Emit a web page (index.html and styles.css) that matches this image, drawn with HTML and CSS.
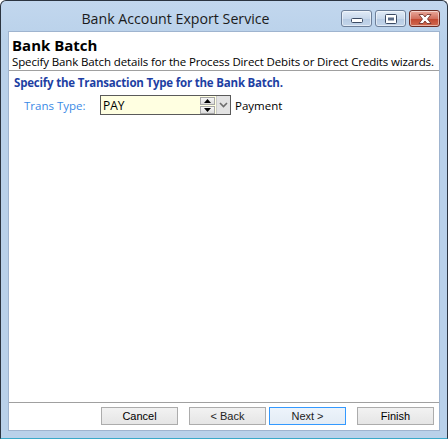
FILE: index.html
```html
<!DOCTYPE html>
<html lang="en">
  <head>
    <meta charset="UTF-8" />
    <title>Bank Account Export Service</title>
    <link rel="stylesheet" href="styles.css">
  </head>
  <body>
    <div class="window">
      <div class="titlebar">
        <div class="titlebar__text">Bank Account Export Service</div>
        <div class="caption">
          <div class="caption__btn caption__btn--min">
            <svg width="12" height="6" viewBox="0 0 12 6"><rect x="0.5" y="0.5" width="11" height="4" rx="1" fill="#fff" stroke="#3b4a63"/></svg>
          </div>
          <div class="caption__btn caption__btn--max">
            <svg width="12" height="10" viewBox="0 0 12 10"><rect x="0.5" y="0.5" width="11" height="9" rx="1" fill="#fff" stroke="#3b4a63"/><rect x="3" y="3.5" width="6" height="3" fill="#5b6c88"/></svg>
          </div>
          <div class="caption__btn caption__btn--close">
            <svg width="16" height="10" viewBox="0 0 16 10"><path d="M2 0.5 H6 L8 3 L10 0.5 H14 L10.5 5 L14 9.5 H10 L8 7 L6 9.5 H2 L5.5 5 Z" fill="#fff" stroke="#6a2a22" stroke-width="0.8" stroke-linejoin="round"/></svg>
          </div>
        </div>
      </div>
      <div class="client">
        <div class="header">
          <div class="header__title">Bank Batch</div>
          <div class="header__desc">Specify Bank Batch details for the Process Direct Debits or Direct Credits wizards.</div>
        </div>
        <div class="body">
          <div class="body__heading">Specify the Transaction Type for the Bank Batch.</div>
          <div class="field">
            <label class="field__label">Trans Type:</label>
            <div class="combo">
              <div class="combo__value">PAY</div>
              <div class="spin">
                <div class="spin__btn"><svg width="7" height="4" viewBox="0 0 7 4"><path d="M0 4 L3.5 0 L7 4 Z" fill="#000"/></svg></div>
                <div class="spin__btn"><svg width="7" height="4" viewBox="0 0 7 4"><path d="M0 0 L3.5 4 L7 0 Z" fill="#000"/></svg></div>
              </div>
              <div class="combo__drop">
                <svg width="9" height="6" viewBox="0 0 9 6"><path d="M1 1 L4.5 4.5 L8 1" fill="none" stroke="#6d6d6d" stroke-width="1.6"/></svg>
              </div>
            </div>
            <div class="field__desc">Payment</div>
          </div>
        </div>
        <div class="footer">
          <button class="btn btn--dark">Cancel</button>
          <div class="footer__pair">
            <button class="btn">&lt; Back</button>
            <button class="btn btn--default">Next &gt;</button>
          </div>
          <button class="btn btn--dark">Finish</button>
        </div>
      </div>
    </div>
  </body>
</html>
```

FILE: styles.css
```css
* {
  margin: 0;
  padding: 0;
  box-sizing: border-box;
}

body {
  width: 448px;
  height: 439px;
  font-family: "Open Sans", "Noto Sans", sans-serif;
  background: #ffffff;
}

.window {
  width: 448px;
  height: 439px;
  border: 1px solid #2b3440;
  border-bottom-color: #3aa9c9;
  border-radius: 6px 6px 0 0;
  background: linear-gradient(#c2d7ee, #b9d1ea 40px);
  display: flex;
  flex-direction: column;
  padding: 0 7px 7px 7px;
}

.titlebar {
  height: 30px;
  display: flex;
  align-items: flex-start;
}

.titlebar__text {
  flex: 1;
  text-align: center;
  font-size: 14.2px;
  line-height: 20px;
  margin-top: 8px;
  padding-left: 2px;
  color: #1b1b1b;
}

.caption {
  display: flex;
  gap: 3px;
  margin-top: 9px;
}

.caption__btn {
  width: 31px;
  height: 17px;
  border: 1px solid #6d7f99;
  border-radius: 3px;
  display: flex;
  align-items: center;
  justify-content: center;
  background: linear-gradient(#e1ebf7, #c9d9ec 50%, #b7cbe3 51%, #c3d5ea);
  box-shadow: inset 0 0 0 1px rgba(255, 255, 255, 0.5);
}

.caption__btn--min svg {
  margin-top: 4px;
}

.caption__btn--close {
  border-color: #6b2d25;
  background: linear-gradient(#e9a99b, #d2715f 50%, #c2472f 51%, #d06a50);
}

.client {
  flex: 1;
  background: #ffffff;
  border: 1px solid #9fb4cf;
  display: flex;
  flex-direction: column;
}

.header {
  padding: 4px 3px 0;
  height: 39px;
  border-bottom: 1px solid #a0a0a0;
}

.header__title {
  font-size: 15px;
  font-weight: bold;
  line-height: 18px;
  color: #000;
}

.header__desc {
  font-size: 11.5px;
  letter-spacing: -0.13px;
  line-height: 16px;
  color: #000;
  white-space: nowrap;
}

.body {
  flex: 1;
  padding: 4px 5px 0;
}

.body__heading {
  font-size: 11.5px;
  font-weight: bold;
  letter-spacing: -0.2px;
  line-height: 16px;
  color: #1d3fa3;
}

.field {
  display: flex;
  align-items: center;
  margin-top: 4px;
}

.field__label {
  width: 86px;
  padding-left: 10px;
  font-size: 11.5px;
  color: #3a8ae6;
}

.combo {
  display: flex;
  align-items: center;
  height: 20px;
  width: 131px;
  border: 1px solid #5a5a5a;
  background: #ffffe1;
}

.combo__value {
  flex: 1;
  font-size: 12px;
  padding-left: 2px;
  color: #000;
}

.spin {
  display: flex;
  flex-direction: column;
  gap: 1px;
  margin-right: 1px;
}

.spin__btn {
  width: 15px;
  height: 8px;
  border: 1px solid #a7a7a7;
  background: linear-gradient(#f7f7f7, #dcdcdc);
  display: flex;
  align-items: center;
  justify-content: center;
}

.combo__drop {
  width: 14px;
  height: 18px;
  background: #e3e3e3;
  border-left: 1px solid #c9c9c9;
  display: flex;
  align-items: center;
  justify-content: center;
}

.field__desc {
  margin-left: 4px;
  font-size: 11.5px;
  color: #000;
}

.footer {
  height: 28px;
  border-top: 1px solid #a0a0a0;
  display: flex;
  align-items: flex-start;
  padding: 4px 0 0 92px;
}

.footer__pair {
  display: flex;
  gap: 3px;
  margin: 0 11px;
}

.btn {
  width: 77px;
  height: 18px;
  border: 1px solid #acacac;
  background: linear-gradient(#f2f2f2, #e5e5e5);
  font-family: "Liberation Sans", Arial, sans-serif;
  font-size: 11px;
  color: #222;
}

.btn--dark {
  color: #000;
}

.btn--default {
  border-color: #3399ff;
  background: linear-gradient(#edf4fb, #e3ecf5);
}
```
